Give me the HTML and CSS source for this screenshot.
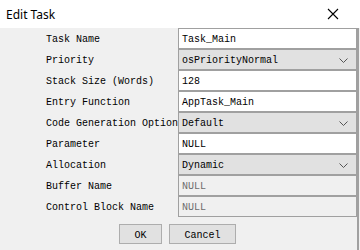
FILE: index.html
```html
<!DOCTYPE html>
<html lang="en">
<head>
  <meta charset="UTF-8" />
  <title>Edit Task</title>
  <link rel="stylesheet" href="styles.css">
</head>
<body>

  <div class="titlebar">
    <span class="title">Edit Task</span>
    <svg class="close" width="12" height="12" viewBox="0 0 12 12">
      <path d="M1 1 L11 11 M11 1 L1 11" stroke="#000" stroke-width="1.1" fill="none"/>
    </svg>
  </div>

  <div class="dialog">
    <div class="form">
      <label>Task Name</label>
      <div class="field">Task_Main</div>

      <label>Priority</label>
      <div class="field select"><span>osPriorityNormal</span><svg class="arrow" width="9" height="5" viewBox="0 0 9 5"><path d="M0.5 0.5 L4.5 4.5 L8.5 0.5" stroke="#555" fill="none"/></svg></div>

      <label>Stack Size (Words)</label>
      <div class="field">128</div>

      <label>Entry Function</label>
      <div class="field">AppTask_Main</div>

      <label>Code Generation Option</label>
      <div class="field select"><span>Default</span><svg class="arrow" width="9" height="5" viewBox="0 0 9 5"><path d="M0.5 0.5 L4.5 4.5 L8.5 0.5" stroke="#555" fill="none"/></svg></div>

      <label>Parameter</label>
      <div class="field">NULL</div>

      <label>Allocation</label>
      <div class="field select"><span>Dynamic</span><svg class="arrow" width="9" height="5" viewBox="0 0 9 5"><path d="M0.5 0.5 L4.5 4.5 L8.5 0.5" stroke="#555" fill="none"/></svg></div>

      <label>Buffer Name</label>
      <div class="field disabled">NULL</div>

      <label>Control Block Name</label>
      <div class="field disabled">NULL</div>
    </div>

    <div class="buttons">
      <button class="ok">OK</button>
      <button class="cancel">Cancel</button>
    </div>
  </div>

</body>
</html>
```

FILE: styles.css
```css
body {
  margin: 0;
  background: #f0f0f0;
  font-family: "Liberation Mono", monospace;
  font-size: 10px;
  color: #000;
}
.titlebar {
  height: 28px;
  background: #fff;
  display: flex;
  align-items: center;
  justify-content: space-between;
  padding: 0 21px 0 6px;
}
.title {
  font-family: "Noto Sans", sans-serif;
  font-size: 12px;
}
.dialog {
  width: 357px;
  height: 222px;
  border-right: 2px solid #a0a0a0;
  background: #f0f0f0;
}
.form {
  display: grid;
  grid-template-columns: 132px 179px;
  grid-auto-rows: 21px;
  padding-left: 46px;
}
label {
  display: flex;
  align-items: center;
  white-space: nowrap;
  padding-top: 2px;
}
.field {
  box-sizing: border-box;
  height: 21px;
  border: 1px solid #a0a0a0;
  background: #fff;
  display: flex;
  align-items: center;
  justify-content: space-between;
  padding: 2px 8px 0 3px;
}
.arrow {
  margin-top: -1px;
}
.select {
  background: #e1e1e1;
}
.disabled {
  background: #f0f0f0;
  color: #6d6d6d;
}
.buttons {
  display: flex;
  justify-content: center;
  gap: 7px;
  margin-top: 7px;
  padding-right: 2px;
}
button {
  height: 20px;
  font-family: "Liberation Mono", monospace;
  font-size: 10px;
  background: #e1e1e1;
  border: 1px solid #adadad;
  padding: 2px 0 0;
  color: #000;
}
.ok {
  width: 43px;
}
.cancel {
  width: 67px;
}
```
